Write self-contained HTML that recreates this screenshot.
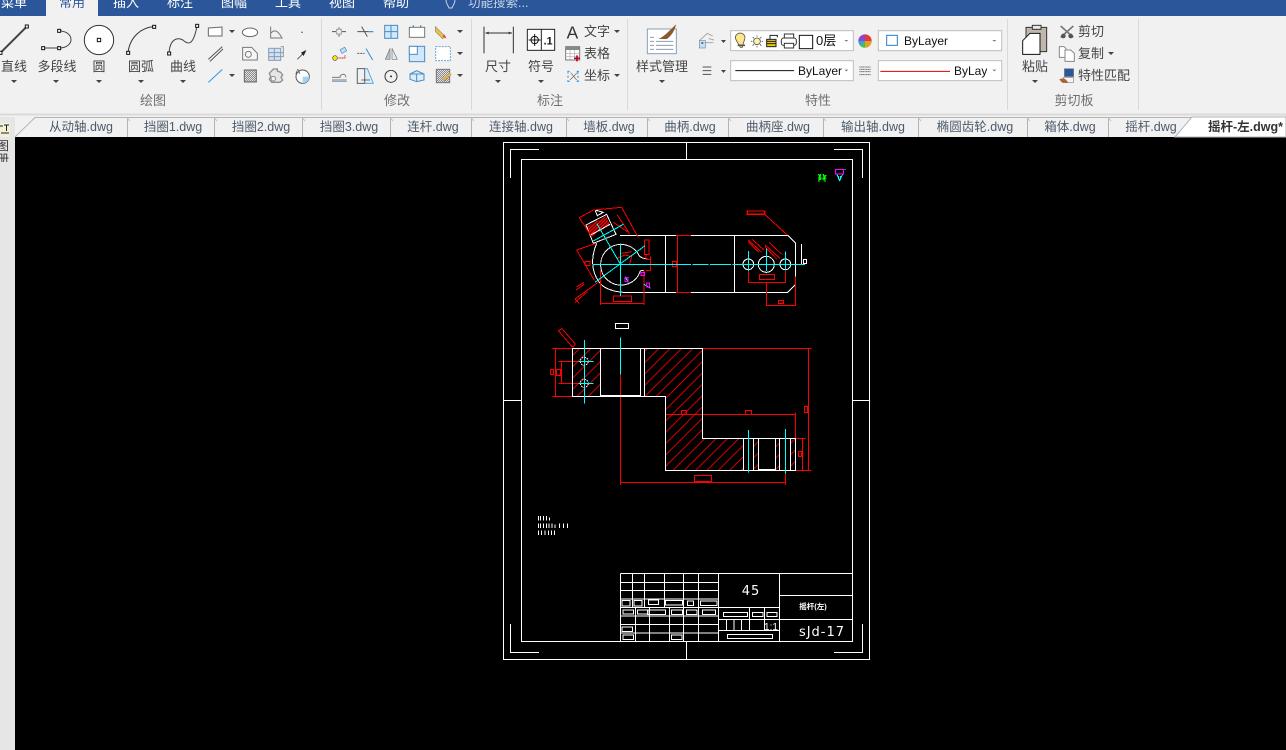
<!DOCTYPE html>
<html><head><meta charset="utf-8"><style>
html,body{margin:0;padding:0;background:#000;width:1286px;height:750px;overflow:hidden}
svg{display:block}
text{font-family:"Liberation Sans","Noto Sans CJK SC",sans-serif}
.l{font-size:13px;fill:#444;text-anchor:middle}
.g{font-size:13px;fill:#707070;text-anchor:middle}
.m{font-size:13px;fill:#fff;text-anchor:middle}
.t{font-size:12.5px;fill:#4d5a6a;text-anchor:middle}
.c{font-size:12px;fill:#222}
</style></head><body>
<svg width="1286" height="750" viewBox="0 0 1286 750" xmlns="http://www.w3.org/2000/svg">
<defs>
<pattern id="h" patternUnits="userSpaceOnUse" width="34" height="34"><path d="M-4 38L38 -4M-21 21L21 -21M13 55L55 13" stroke="#f00" stroke-width="2.4" fill="none"/></pattern>
<pattern id="h2" patternUnits="userSpaceOnUse" width="10" height="10"><path d="M-2 12L12 -2M-7 7L7 -7M3 17L17 3" stroke="#f00" stroke-width="4.500" fill="none"/></pattern>
<pattern id="hg" patternUnits="userSpaceOnUse" width="6" height="6"><path d="M0 6L6 0" stroke="#666" stroke-width="2"/></pattern>
<clipPath id="c4"><rect x="950" y="60" width="37" height="22"/></clipPath>
<clipPath id="c15"><rect x="0" y="117" width="15" height="45"/></clipPath>
</defs>
<!-- base -->
<rect width="1286" height="750" fill="#000"/>
<rect width="1286" height="137" fill="#f1f1f1"/>
<rect width="1286" height="16" fill="#2b579a"/>
<rect x="46" y="0" width="52" height="17" fill="#f1f1f1"/>
<rect x="0" y="137" width="15" height="613" fill="#e6e6e6"/>
<!-- menu -->
<text class="m" x="14" y="7">菜单</text>
<text class="m" x="72" y="7" style="fill:#2b579a">常用</text>
<text class="m" x="126" y="7">插入</text>
<text class="m" x="180" y="7">标注</text>
<text class="m" x="234" y="7">图幅</text>
<text class="m" x="288" y="7">工具</text>
<text class="m" x="342" y="7">视图</text>
<text class="m" x="396" y="7">帮助</text>
<path d="M446 0C446 4 448 5 449 8L452 8C453 5 455 4 455 0" fill="none" stroke="#c8d3e6"/>
<text x="468" y="7" style="font-size:12.5px;fill:#c8d3e6">功能搜索...</text>
<!-- ribbon separators -->
<path d="M321.500 19V110M471.500 19V110M627.500 19V110M1007.500 19V110M1138.500 19V110" stroke="#d9d9d9"/>
<path d="M0 114.500H1286" stroke="#dadada" stroke-width="2"/>
<!-- ribbon labels -->
<g>
<text class="l" x="14" y="71">直线</text><text class="l" x="57" y="71">多段线</text><text class="l" x="99" y="71">圆</text><text class="l" x="141" y="71">圆弧</text><text class="l" x="183" y="71">曲线</text>
<text class="l" x="498" y="71">尺寸</text><text class="l" x="541" y="71">符号</text><text class="l" x="662" y="71">样式管理</text><text class="l" x="1035" y="71">粘贴</text>
<text class="l" x="597" y="36">文字</text><text class="l" x="597" y="58">表格</text><text class="l" x="597" y="80">坐标</text>
<text class="l" x="1091" y="36">剪切</text><text class="l" x="1091" y="58">复制</text><text class="l" x="1104" y="80">特性匹配</text>
<text class="g" x="153" y="105">绘图</text><text class="g" x="397" y="105">修改</text><text class="g" x="550" y="105">标注</text><text class="g" x="818" y="105">特性</text><text class="g" x="1074" y="105">剪切板</text>
</g>
<!-- dropdown triangles -->
<g fill="#444"><path d="M11 80h6l-3 3zM96 80h6l-3 3zM138 80h6l-3 3zM180 80h6l-3 3zM53 80h6l-3 3zM229 30h6l-3 3zM229 74h6l-3 3zM457 30h6l-3 3zM457 52h6l-3 3zM457 74h6l-3 3zM495 80h6l-3 3zM538 80h6l-3 3zM614 30h6l-3 3zM614 74h6l-3 3zM659 80h6l-3 3zM721 40h5l-2.500 3zM721 70h5l-2.500 3zM1032 80h6l-3 3zM1108 52h6l-3 3z"/></g>
<!-- draw icons -->
<g transform="scale(.33333)" fill="none">
<path d="M0 160L80 80" stroke="#444" stroke-width="6"/>
<path d="M129 144H177M177 93C225 93 225 144 177 144" stroke="#444" stroke-width="3"/>
<circle cx="297" cy="120" r="44" fill="#fff" stroke="#333" stroke-width="3"/>
<path d="M384 158C390 110 425 82 462 80" stroke="#333" stroke-width="3"/>
<path d="M507 160C510 110 540 110 555 125C575 140 585 110 591 78" stroke="#444" stroke-width="3"/>
<g fill="#fff" stroke="#111" stroke-width="3"><rect x="76" y="75" width="9" height="9"/><rect x="-3" y="154" width="9" height="9"/><rect x="125" y="140" width="9" height="9"/><rect x="173" y="140" width="9" height="9"/><rect x="173" y="88" width="9" height="9"/><rect x="292" y="115" width="10" height="10"/><rect x="380" y="154" width="9" height="9"/><rect x="458" y="76" width="9" height="9"/><rect x="503" y="156" width="9" height="9"/><rect x="587" y="73" width="9" height="9"/></g>
<path d="M625 84L666 81V108H625Z" fill="#fff" stroke="#666" stroke-width="3"/>
<ellipse cx="750" cy="97" rx="23" ry="13" fill="#fff" stroke="#666" stroke-width="3"/>
<path d="M812 80V114H848M812 100C825 85 835 95 845 112" stroke="#777" stroke-width="3"/>
<rect x="904" y="95" width="4" height="4" fill="#555"/>
<path d="M625 178L667 140M630 184L669 147" stroke="#555" stroke-width="3"/>
<path d="M728 142H755L772 160V180H728Z" fill="#f6f6f6" stroke="#777" stroke-width="3"/><circle cx="745" cy="163" r="9" stroke="#777" stroke-width="3"/>
<rect x="806" y="145" width="36" height="36" fill="#cfe3f7" stroke="#8a9ab0" stroke-width="3"/><path d="M806 158H850M823 145V181M842 140H850V170H842M806 170H850" stroke="#8a9ab0" stroke-width="3"/>
<path d="M892 178L917 153" stroke="#555" stroke-width="3"/><path d="M919 150L903 158L911 168Z" fill="#222"/>
<path d="M625 247L667 208" stroke="#2b9bdc" stroke-width="3"/>
<rect x="733" y="210" width="36" height="36" fill="url(#hg)" stroke="#666" stroke-width="3"/>
<path d="M820 207H832V213L842 217L848 225L843 232L848 240L840 247H815L808 238L812 230L808 220Z" fill="#e6e6e6" stroke="#8a8f95" stroke-width="4"/><circle cx="820" cy="236" r="7" fill="#f1f1f1" stroke="#8a8f95" stroke-width="3"/>
<circle cx="908" cy="230" r="20" fill="#fff" stroke="#555" stroke-width="3"/><path d="M908 230H928C928 242 918 250 908 250Z" fill="#9fd4f3"/><text x="886" y="222" style="font-size:22px;fill:#555">A</text>
</g>
<!-- modify & annotate icons -->
<g transform="translate(320,0) scale(.33333)" fill="none">
<g stroke="#555" stroke-width="3"><rect x="50" y="88" width="14" height="14" stroke="#999"/><path d="M36 95H48M66 95H78M57 82V86M57 104V110"/>
<path d="M112 95H160M125 80L142 110" /><path d="M145 95H160" stroke="#3aa0dc"/></g>
<g stroke="#4e8ac0" stroke-width="3"><rect x="194" y="76" width="39" height="39" fill="#cfe8fb"/><path d="M213 76V115M194 95H233"/></g>
<rect x="268" y="82" width="46" height="30" fill="#fff" stroke="#777" stroke-width="3"/><path d="M280 82V76M302 82V76" stroke="#2b8fd0" stroke-width="4"/>
<path d="M346 80L376 110L368 116L346 94Z" fill="#f3c33a" stroke="#888" stroke-width="2"/><path d="M368 110L380 116L372 102" fill="#d0503a"/>
<rect x="62" y="145" width="16" height="12" fill="#bfe1f7" stroke="#4e8ac0" stroke-width="2" transform="rotate(-30 70 151)"/><circle cx="45" cy="174" r="7" fill="#ffe600" stroke="#444" stroke-width="2"/><path d="M55 174H75V165" stroke="#c03030" stroke-width="2"/>
<path d="M112 160H134" stroke="#555" stroke-width="3" stroke-dasharray="6 3"/><path d="M138 146L158 180" stroke="#2b8fd0" stroke-width="3"/>
<path d="M210 145L196 178H210Z" fill="#b8c4cc" stroke="#777" stroke-width="2"/><path d="M216 145L232 178H216Z" fill="#dfe8ee" stroke="#777" stroke-width="2"/>
<rect x="268" y="139" width="46" height="46" fill="#cfe8fb" stroke="#4e8ac0" stroke-width="3"/><rect x="268" y="139" width="24" height="24" fill="#fff" stroke="#4e8ac0" stroke-width="3"/>
<rect x="347" y="140" width="44" height="42" fill="#fff" stroke="#6aa8d8" stroke-width="3" stroke-dasharray="6 3"/>
<path d="M36 240H80M36 232H60C60 222 76 218 78 232" stroke="#777" stroke-width="3"/><path d="M36 245H80" stroke="#4e8ac0" stroke-width="2"/>
<path d="M112 206H142L160 250H112Z" fill="#d8eefc" stroke="#6aa8d8" stroke-width="3"/><path d="M112 206H134V250H112Z" fill="#f1f1f1" stroke="#666" stroke-width="3"/><path d="M124 240H150" stroke="#333" stroke-width="2"/>
<circle cx="213" cy="229" r="18" stroke="#333" stroke-width="3"/><circle cx="213" cy="229" r="3" fill="#333"/><path d="M208 206L213 212L218 206" fill="#f1f1f1"/>
<path d="M270 222L290 212L312 222V240L290 245L270 238Z" fill="#d8eefc" stroke="#4e8ac0" stroke-width="3"/><path d="M290 222L312 222M290 222V245M270 222L290 222" stroke="#4e8ac0" stroke-width="3"/>
<rect x="349" y="208" width="40" height="40" fill="url(#hg)" stroke="#777" stroke-width="3"/><path d="M366 238L388 218L394 224L372 244Z" fill="#e6b34a" stroke="#666"/>
<path d="M492 80V160M580 80V160M496 99H576" stroke="#333" stroke-width="3"/><path d="M496 99L506 95V103ZM576 99L566 95V103Z" fill="#333"/>
<rect x="622" y="88" width="82" height="63" fill="#fff" stroke="#222" stroke-width="3"/><path d="M664 88V151" stroke="#222" stroke-width="3"/><circle cx="644" cy="120" r="11" stroke="#111" stroke-width="3"/><path d="M626 120H662M644 102V138" stroke="#111" stroke-width="3"/>
<text x="671" y="133" style="font-size:32px;font-weight:bold;fill:#111">.1</text>
<text x="740" y="116" style="font-size:52px;fill:#333">A</text>
<rect x="737" y="140" width="42" height="40" fill="#fff" stroke="#777" stroke-width="3"/><path d="M737 141H779V150H737Z" fill="#888"/><path d="M737 160H779M737 170H779M750 150V180M764 150V180" stroke="#aaa" stroke-width="2"/><path d="M771 166V184M762 175H780" stroke="#c00020" stroke-width="5"/>
<path d="M742 214H750M770 214H778M742 244H750M770 244H778M744 214V246M774 214V246" stroke="#3a9bd8" stroke-width="3" stroke-dasharray="7 6"/><path d="M750 240L772 218M752 218L770 240" stroke="#666" stroke-width="2"/>
</g>
<!-- properties icons -->
<g transform="translate(630,0) scale(.33333)" fill="none">
<rect x="52" y="87" width="87" height="74" fill="#fff" stroke="#8a9fb8" stroke-width="3"/>
<path d="M60 112H72M60 124H72M60 136H72M60 148H72M78 124H130M78 136H130M78 148H130" stroke="#8a9fb8" stroke-width="3"/>
<path d="M85 117C100 112 118 92 138 73C135 92 122 110 110 117Z" fill="#8b5a2b"/>
<path d="M208 122L232 100L248 108M222 128L250 128M236 116L252 120" stroke="#aaa" stroke-width="3"/><rect x="208" y="122" width="18" height="22" fill="#c7dff2" stroke="#7a8a9a" stroke-width="2"/><circle cx="217" cy="129" r="3" fill="#2b579a"/>
<path d="M218 201H244M218 212H244M218 223H244" stroke="#555" stroke-width="3"/>
<g fill="#fff" stroke="#bdbdbd" stroke-width="3"><rect x="302" y="92" width="368" height="60"/><rect x="302" y="182" width="368" height="60"/><rect x="745" y="92" width="370" height="60"/><rect x="745" y="182" width="370" height="60"/></g>
<path d="M331 142C322 125 312 115 318 106C325 97 337 97 343 106C349 115 339 125 337 142Z" fill="#ffe68a" stroke="#555" stroke-width="2.500"/><path d="M323 136H345" stroke="#555" stroke-width="5"/>
<circle cx="381" cy="124" r="10" fill="#fff3b0" stroke="#555" stroke-width="2.500"/><path d="M381 106V110M381 138V142M363 124H367M395 124H399M368 111L372 115M394 111L390 115M368 137L372 133M394 137L390 133" stroke="#555" stroke-width="2.500"/>
<rect x="410" y="118" width="28" height="22" fill="#e8c81a" stroke="#222" stroke-width="3"/><path d="M410 124H438M410 131H438" stroke="#222" stroke-width="3"/><path d="M420 118V106H442V112" stroke="#222" stroke-width="3"/>
<rect x="454" y="114" width="45" height="22" rx="7" fill="#fff" stroke="#333" stroke-width="3"/><rect x="463" y="102" width="28" height="12" fill="#fff" stroke="#333" stroke-width="3"/><rect x="463" y="130" width="28" height="14" fill="#fff" stroke="#333" stroke-width="3"/>
<rect x="508" y="106" width="40" height="40" fill="#fff" stroke="#111" stroke-width="3"/>
<path d="M316 212H492" stroke="#111" stroke-width="3"/>
<path d="M751 214H960" stroke="#e00000" stroke-width="3"/>
<rect x="770" y="106" width="32" height="30" fill="#fff" stroke="#1f7fd0" stroke-width="3"/>
<path d="M643 120h12l-6 5zM643 209h12l-6 5zM1087 120h12l-6 5zM1087 209h12l-6 5z" fill="#777"/>
<circle cx="705" cy="123" r="20" fill="#f6d22b"/><path d="M705 123L705 103A20 20 0 0 0 685 123Z" fill="#8e44d8"/><path d="M705 123L685 123A20 20 0 0 0 705 143Z" fill="#3aa0dc"/><path d="M705 123L705 143A20 20 0 0 0 725 123Z" fill="#e0a020"/><path d="M705 123L725 123A20 20 0 0 0 705 103Z" fill="#e23a3a"/><path d="M705 123L690 137A20 20 0 0 0 705 143Z" fill="#3fbf5f"/>
<path d="M688 201H722M688 208H722M688 215H722M688 224H722" stroke="#777" stroke-width="3" stroke-dasharray="4 1"/>
</g>
<text class="c" x="904" y="45" style="fill:#111">ByLayer</text>
<text class="c" x="798" y="75" style="fill:#111">ByLayer</text>
<text class="c" x="954" y="75" clip-path="url(#c4)" style="fill:#111">ByLayer</text>
<text x="816" y="45" style="font-size:13px;fill:#111">0层</text>
<!-- clipboard icons -->
<g transform="translate(1000,0) scale(.33333)" fill="none">
<path d="M78 82H140V155H78Z" fill="#bfb7ac" stroke="#333" stroke-width="3"/><rect x="97" y="76" width="26" height="12" fill="#e8e8e8" stroke="#333" stroke-width="3"/>
<path d="M68 122L90 100H120V163H68Z" fill="#fff" stroke="#111" stroke-width="3"/>
<path d="M182 78L220 112M220 78L182 112" stroke="#777" stroke-width="5"/><circle cx="190" cy="108" r="7" fill="#555"/><circle cx="212" cy="108" r="7" fill="#555"/>
<path d="M178 140H192L198 146V172H178Z" fill="#fff" stroke="#888" stroke-width="3"/><path d="M195 150H212L223 160V184H195Z" fill="#fff" stroke="#888" stroke-width="3"/>
<rect x="193" y="206" width="28" height="24" fill="#2b579a" stroke="#888" stroke-width="2"/><rect x="190" y="232" width="30" height="16" fill="#f4f4f4" stroke="#888" stroke-width="2"/>
<path d="M178 238C190 232 200 238 204 248H186Z" fill="#b0622a"/>
</g>
<!-- tabs -->
<path d="M15 137L35 117.500H1192M127.500 118V137M214.500 118V137M302.500 118V137M390.500 118V137M471.500 118V137M566.500 118V137M647.500 118V137M728.500 118V137M823.500 118V137M918.500 118V137M1027.500 118V137M1108.500 118V137" fill="none" stroke="#b4b4b4"/>
<path d="M127.500 118l2.500 3M214.500 118l2.500 3M302.500 118l2.500 3M390.500 118l2.500 3M471.500 118l2.500 3M566.500 118l2.500 3M647.500 118l2.500 3M728.500 118l2.500 3M823.500 118l2.500 3M918.500 118l2.500 3M1027.500 118l2.500 3M1108.500 118l2.500 3" fill="none" stroke="#c4c4c4"/>
<path d="M1175 137L1192 117H1286V137Z" fill="#fff" stroke="#b4b4b4"/>
<g>
<text class="t" x="81" y="131">从动轴.dwg</text><text class="t" x="173" y="131">挡圈1.dwg</text><text class="t" x="261" y="131">挡圈2.dwg</text><text class="t" x="349" y="131">挡圈3.dwg</text><text class="t" x="433" y="131">连杆.dwg</text><text class="t" x="521" y="131">连接轴.dwg</text><text class="t" x="609" y="131">墙板.dwg</text><text class="t" x="690" y="131">曲柄.dwg</text><text class="t" x="778" y="131">曲柄座.dwg</text><text class="t" x="873" y="131">输出轴.dwg</text><text class="t" x="975" y="131">椭圆齿轮.dwg</text><text class="t" x="1070" y="131">箱体.dwg</text><text class="t" x="1151" y="131">摇杆.dwg</text>
<text x="1208" y="131" style="font-size:12.500px;font-weight:bold;fill:#333">摇杆-左.dwg*</text>
</g>
<!-- left strip -->
<rect x="0" y="117" width="15" height="45" fill="#e6e6e6"/>
<rect x="0" y="123" width="10" height="14" fill="#f3f0d8"/>
<path d="M0 126H3M4 125H9M6.500 125V131M1 133H9" stroke="#222" fill="none"/>
<rect x="0" y="162" width="15" height="588" fill="#e6e6e6"/>
<g clip-path="url(#c15)"><text x="-3" y="150" style="font-size:12px;fill:#333">图</text><text x="-3" y="163" style="font-size:12px;fill:#333">册</text></g>
<!-- drawing frame -->
<g shape-rendering="crispEdges" fill="none" stroke="#fff">
<rect x="503.500" y="142.500" width="366" height="517"/>
<rect x="521.500" y="159.500" width="331" height="482"/>
<path d="M510.500 178V149.500H539M862.500 178V149.500H834M510.500 624V652.500H539M862.500 624V652.500H834M686.500 142V159M686.500 642V659M504 400.500H521M853 400.500H869"/>
</g>
<!-- top right symbol -->
<g transform="translate(790,150) scale(.33333)" shape-rendering="crispEdges" fill="none">
<path d="M86 72L92 90M92 72L86 95M100 72L106 95M108 75L98 90M84 84H96M98 84H110" stroke="#0f0" stroke-width="4"/>
<path d="M140 72L149 92L158 72" stroke="#0ff" stroke-width="3"/><path d="M146 78V88M152 78V88M163 58H167" stroke="#0ff" stroke-width="3"/>
<rect x="136" y="58" width="25" height="14" stroke="#f0f" stroke-width="3"/>
</g>
<!-- top view -->
<g transform="translate(560,195) scale(.33333)" shape-rendering="crispEdges" fill="none" stroke-width="3">
<g stroke="#fff">
<path d="M180 121H348M393 121H683L707 145V245M707 268L683 292H393M348 292H190C160 290 130 280 118 262C90 225 95 180 110 145"/>
<path d="M317 121V292M523 121V292M725 147V207"/>
<path d="M237 181A61 61 0 1 0 241 228C244 226 250 226 253 228M237 181C244 190 252 190 262 192"/>
<circle cx="565" cy="208" r="16"/><circle cx="619" cy="208" r="24"/><circle cx="676" cy="208" r="16"/>
<rect x="730" y="193" width="9" height="13"/>
<path d="M105 45L130 52L112 62Z"/>
</g>
<path d="M80 95L138 63L150 90L95 125Z" fill="url(#h2)" stroke="none"/>
<path d="M78 90L140 58L168 118L100 145ZM92 120L150 88" stroke="#fff"/>
<g stroke="#f00">
<path d="M58 68L100 45M100 45L185 37L235 128M58 68L95 125"/>
<path d="M50 165L108 145M50 165L103 256M45 312L120 258M45 322L82 290M45 312L58 326M50 275L72 262M48 285L72 268"/>
<path d="M160 82L205 112M172 60L210 118"/>
<path d="M172 190L195 180L215 185L208 210M185 175L215 170"/>
<rect x="253" y="135" width="14" height="43"/>
<path d="M258 178V193H272M272 185V226M258 226H272"/>
<path d="M348 121H393M348 292H393M352 121V292"/><rect x="337" y="200" width="13" height="14"/>
<path d="M122 225V330M252 225V330M122 325H252"/><rect x="160" y="303" width="55" height="17"/>
<rect x="562" y="48" width="52" height="10" stroke-width="4"/><path d="M614 58L683 121"/>
<path d="M565 135L605 172M575 132L612 165M565 140L596 172M615 150L660 190M628 142L665 178M615 155L650 192"/>
<path d="M565 228V263H676V228"/><rect x="598" y="238" width="46" height="16"/>
<path d="M619 263V332H707V245"/><rect x="655" y="316" width="16" height="10"/>
<path d="M75 200H90V212H75Z"/>
</g>
<g stroke="#0ff">
<path d="M97 208H393M397 208H445M450 208H513M518 208H735"/>
<path d="M181 145V303M565 168V228M619 160V228M676 170V226"/>
<path d="M110 85L181 207M100 138L190 88M105 262L255 152"/>
<path d="M195 245L205 262M252 268L272 280"/>
</g>
<g stroke="#f0f"><rect x="243" y="232" width="11" height="10"/><rect x="195" y="247" width="9" height="12"/><rect x="260" y="264" width="9" height="12"/></g>
</g>
<!-- front view -->
<g transform="translate(540,320) scale(.33333)" shape-rendering="crispEdges" fill="none" stroke-width="3">
<path d="M98 85H181V229H98Z" fill="url(#h)" stroke="none"/>
<path d="M313 85H487V355H610V451H377V229H313Z" fill="url(#h)" stroke="none"/>
<path d="M640 355H655V451H640ZM707 355H718V451H707ZM751 355H767V451H751Z" fill="url(#h)" stroke="none"/>
<g stroke="#f00">
<path d="M487 85H815M37 85H98M37 229H98M46 85V229M55 124H118M55 190H118M65 124V190"/>
<rect x="31" y="148" width="10" height="16"/><rect x="49" y="148" width="13" height="19"/>
<path d="M805 85V451M767 451H815M377 283H767M767 278V355M787 355V451M767 355H797"/>
<rect x="793" y="259" width="10" height="18"/><rect x="425" y="271" width="15" height="12"/><rect x="616" y="271" width="19" height="12"/><rect x="775" y="394" width="10" height="16"/>
<path d="M241 163V495M241 487H737M737 460V495"/><rect x="463" y="466" width="51" height="19"/>
<path d="M55 32L98 82M66 26L106 72M55 32L66 26M98 82L106 72"/>
</g>
<g stroke="#fff">
<path d="M98 85H487V355H767V451H377V229H98ZM181 85V229M302 85V229M313 85V229M181 227H302M610 355V451M640 355V451M655 355V451M707 355V451M718 355V451M751 355V451M655 448H707"/>
<circle cx="133" cy="124" r="12" stroke-dasharray="5 3"/><circle cx="133" cy="190" r="12" stroke-dasharray="5 3"/>
</g>
<rect x="226" y="10" width="40" height="15" stroke="#fff"/>
<g stroke="#0ff">
<path d="M133 60V250M115 124H160M115 190H160M241 52V163M625 330V458M736 327V460" />
</g>
</g>
<!-- small note -->
<g transform="translate(525,505) scale(.33333)" shape-rendering="crispEdges" fill="none" stroke="#fff" stroke-width="3">
<path d="M40 33V47M47 33V47M56 33V47M64 33V47M73 38V47M40 55V69M47 55V69M56 55V69M64 55V69M72 55V69M81 55V69M90 58V69M103 55V69M115 55V69M128 55V69M40 76V90M50 76V90M60 76V90M70 76V90M79 76V90M89 76V90"/>
</g>
<!-- title block -->
<g transform="translate(610,565) scale(.33333)" shape-rendering="crispEdges" fill="none" stroke="#fff" stroke-width="3">
<path d="M31 25H727M31 25V229M326 25V229M508 25V229M508 91H727M508 163H727"/>
<path d="M31 52H326M31 76H326M31 102H326M31 127H508M31 153H326M31 178H326M31 204H326M326 163H508M326 197H508"/>
<path d="M67 25V127M103 25V127M163 25V127M220 25V127M266 25V127M77 127V229M118 127V229M178 127V229M220 127V229M266 127V229M418 127V197M463 127V197M349 163V197M372 163V197M394 163V197"/>
<g stroke-width="3"><rect x="36" y="107" width="24" height="16"/><rect x="72" y="107" width="24" height="16"/><rect x="115" y="105" width="31" height="14"/><rect x="166" y="106" width="52" height="14"/><rect x="232" y="108" width="19" height="14"/><rect x="271" y="108" width="50" height="14"/>
<rect x="39" y="135" width="32" height="12"/><rect x="82" y="135" width="32" height="12"/><rect x="112" y="135" width="55" height="14"/><rect x="184" y="135" width="33" height="14"/><rect x="229" y="135" width="32" height="14"/><rect x="277" y="135" width="40" height="14"/>
<rect x="36" y="186" width="32" height="14"/><rect x="39" y="210" width="32" height="14"/><rect x="184" y="210" width="32" height="14"/>
<rect x="340" y="142" width="72" height="13"/><rect x="427" y="142" width="32" height="13"/><rect x="471" y="142" width="30" height="13"/><rect x="352" y="208" width="136" height="12"/></g>
</g>
<text x="751" y="595" text-anchor="middle" style="font-size:13px;fill:#fff;font-family:'DejaVu Sans',sans-serif;letter-spacing:1px">45</text>
<text x="771" y="630" text-anchor="middle" style="font-size:10px;fill:#fff;font-family:'Liberation Sans',sans-serif">1:1</text>
<text x="822" y="636" text-anchor="middle" style="font-size:13px;fill:#fff;font-family:'DejaVu Sans',sans-serif;letter-spacing:1px">sJd-17</text>
<text x="813" y="609" text-anchor="middle" style="font-size:7.5px;font-weight:bold;fill:#fff">摇杆(左)</text>
</svg>
</body></html>
